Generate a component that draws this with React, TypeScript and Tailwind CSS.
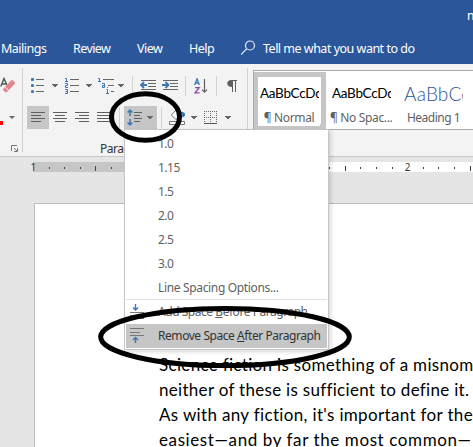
import React from 'react';

const UI = "font-['Noto_Sans','Open_Sans',sans-serif] whitespace-pre";

function Caret({ className = '' }: { className?: string }) {
  return (
    <svg className={`shrink-0 ${className}`} width="6" height="4" viewBox="0 0 6 4" shapeRendering="crispEdges">
      <path d="M0 0h6v1h-1v1h-1v1h-2v-1h-1v-1h-1z" fill="#666" />
    </svg>
  );
}

function Lines({ rows, className = '' }: { rows: [number, number][]; className?: string }) {
  return (
    <svg className={`shrink-0 ${className}`} width="14" height="11" viewBox="0 0 14 11" shapeRendering="crispEdges">
      {rows.map(([x, w], i) => (
        <rect key={i} x={x} y={i * 3} width={w} height="1" fill="#5f5f5f" />
      ))}
    </svg>
  );
}

function Rule({ className = '' }: { className?: string }) {
  return <div className={`w-px shrink-0 bg-[#d2d2d2] ${className}`} />;
}

function Bullets() {
  return (
    <svg className="shrink-0" width="14" height="16" viewBox="0 0 14 16">
      {[2, 8, 14].map((y) => (
        <g key={y}>
          <circle cx="1.5" cy={y - 0.5} r="1.6" fill="#3c77b5" />
          <path d={`M5 ${y - 0.5}h8`} stroke="#666" />
        </g>
      ))}
    </svg>
  );
}

function Numbers() {
  return (
    <svg className="shrink-0" width="15" height="18" viewBox="0 0 15 18">
      <g fill="none" stroke="#3c77b5">
        <path d="M0 1.5h1.5V4M0 4.5h3" />
        <path d="M0 6.5h2.5v2h-2v2H3" />
        <path d="M0 12.5h2.5v4H0M.5 14.5h2" />
      </g>
      <path d="M5 2.5h9M5 8.5h9M5 14.5h9" stroke="#666" />
    </svg>
  );
}

function Multilevel() {
  return (
    <svg className="shrink-0" width="16" height="18" viewBox="0 0 16 18">
      <g fill="none" stroke="#3c77b5">
        <path d="M0 1.5h1.5V4M0 4.5h3M4 6.5h2.5v4h-2v-2h2M8.5 12.5h1v4M8 16.5h3M9 10.5h1" />
      </g>
      <path d="M5 2.5h11M10 8.5h6M13 14.5h3" stroke="#666" />
    </svg>
  );
}

function Indent({ right = false }: { right?: boolean }) {
  return (
    <svg className="shrink-0" width="16" height="14" viewBox="0 0 16 14">
      <path d="M1 1.5h15M8 4.5h8M8 7.5h8M1 10.5h15" stroke="#666" />
      <path
        d={right ? 'M0 6h6M3.5 3l3 3-3 3' : 'M7 6H1M4 3L1 6l3 3'}
        stroke="#3c77b5"
        strokeWidth="1.8"
        fill="none"
      />
    </svg>
  );
}

function Sort() {
  return (
    <svg className="shrink-0" width="14" height="16" viewBox="0 0 14 16" fill="none">
      <path d="M.7 7L3 .8 5.4 7M1.5 5h3.2" stroke="#3c77b5" strokeWidth="1.3" />
      <path d="M1 9.6h4.2L1 14.9h4.5" stroke="#8850a0" strokeWidth="1.4" />
      <path d="M10.5 1v13M8 11.6l2.5 2.6 2.5-2.6" stroke="#5f5f5f" strokeWidth="1.2" />
    </svg>
  );
}

function Pilcrow() {
  return (
    <svg className="shrink-0" width="11" height="14" viewBox="0 0 11 14">
      <path d="M4.5 1H10v1H9v11H8V2H6v11H5V8C2 8 .3 6.5.3 4.4S1.8 1 4.5 1z" fill="#5f5f5f" />
    </svg>
  );
}

function Spacing() {
  return (
    <svg className="shrink-0" width="15" height="17" viewBox="0 0 15 17" fill="none">
      <path d="M3 1v6M.6 3.5L3 1.1l2.4 2.4M3 10v6M.6 13.5L3 15.9l2.4-2.4" stroke="#3c77b5" strokeWidth="1.5" />
      <path d="M7 3.5h8M7 6.5h6M7 9.5h8M7 12.5h6" stroke="#5f5f5f" />
    </svg>
  );
}

function Bucket() {
  return (
    <svg className="shrink-0" width="17" height="17" viewBox="0 0 17 17" fill="none">
      <path d="M7 1L2.3 6 7 10.5 12 6 7 1z" fill="#fff" stroke="#777" />
      <path d="M12 3c3-.5 4.5 1 4 3.3-.4 1.6-2 2.6-3 1.2z" fill="#3c77b5" />
      <path d="M.5 12.5h15v3H.5z" fill="#fff" stroke="#777" />
    </svg>
  );
}

function Borders() {
  return (
    <svg className="shrink-0" width="13" height="13" viewBox="0 0 13 13" fill="none" shapeRendering="crispEdges">
      <path d="M0 .5h13M0 6.5h13M.5 0v13M6.5 0v13M12.5 0v13" stroke="#666" strokeDasharray="1 1" />
      <path d="M0 12.5h13" stroke="#555" />
    </svg>
  );
}

function FontTools() {
  return (
    <div className="w-[22px] shrink-0">
      <svg width="22" height="92" viewBox="0 0 22 92" fill="none">
        <path d="M.8 22.5L4 14.6 7 21M1.8 20h4" stroke="#555" strokeWidth="1.4" />
        <path d="M3 25l8-8.5q1-1 2.2 0l1.4 1.5q1 1 0 2.1L7 28q-1 .6-2 0l-2-2z" fill="#e5868e" />
        <path d="M4.8 22.8l4 3.8" stroke="#f3f3f3" />
        <path d="M0 57h3v4H0z" fill="#f00" />
        <path d="M9 52h6l-3 3z" fill="#666" />
        <path d="M11.5 87v-5.5H17M14 84l3 3M17.5 84v3.5H14" stroke="#777" />
      </svg>
    </div>
  );
}

function Ruler() {
  const cells = Array.from({ length: 29 }, (_, i) => i);
  return (
    <div className="flex h-[10px] overflow-hidden bg-[linear-gradient(to_right,#e5e5e5_33px,#c6c6c6_33px,#c6c6c6_158px,#fff_158px)] pl-[25.7px]">
      {cells.map((i) => (
        <div key={i} className="flex w-[15.6px] shrink-0 items-center justify-center">
          {i % 8 === 0 ? (
            <span className={`${UI} text-[10px] leading-[10px] text-[#333]`}>{i === 0 ? '1' : i === 16 ? '1' : i === 24 ? '2' : ''}</span>
          ) : (
            <span className={i % 4 === 0 ? 'mt-[3px] h-[5px] w-px bg-[#444]' : 'mt-[2px] h-[2px] w-px bg-[#444]'} />
          )}
        </div>
      ))}
    </div>
  );
}

function MenuIcon({ after = false }: { after?: boolean }) {
  return (
    <svg className={`${after ? 'ml-1' : 'ml-[5px]'} w-[14px] shrink-0`} height="16" viewBox="0 0 14 16" fill="none">
      {after ? (
        <>
          <path d="M0 .5h14M0 4.5h10M0 7.5h14" stroke="#777" />
          <path d="M5.5 15V9.5M3 12L5.5 9.5 8 12" stroke="#3c77b5" strokeWidth="1.4" />
        </>
      ) : (
        <>
          <path d="M5.5 0v5.5M3 3.5L5.5 6 8 3.5" stroke="#3c77b5" strokeWidth="1.4" />
          <path d="M0 8.5h14M0 11.5h10M0 14.5h14" stroke="#777" />
        </>
      )}
    </svg>
  );
}

function Menu() {
  return (
    <div className={`${UI} absolute left-[124px] top-[129px] h-[221px] w-[205px] border border-[#c6c6c6] bg-white pt-px text-[12px] text-[#5f5f5f] shadow-[2px_2px_4px_rgba(0,0,0,0.15)]`}>
      {['1.0', '1.15', '1.5', '2.0', '2.5', '3.0'].map((v) => (
        <div key={v} className="h-6 pl-[33px] leading-[25px] tracking-[-0.5px]">{v}</div>
      ))}
      <div className="h-6 pl-[33px] leading-[25px] tracking-[-0.34px]">Line Spacing Options...</div>
      <div className="mx-px h-px bg-[#e1e1e1]" />
      <div className="flex h-6 items-center">
        <MenuIcon />
        <span className="ml-[14px] tracking-[-0.46px]">Add Space <u>B</u>efore Paragraph</span>
      </div>
      <div className="mx-px flex h-6 items-center bg-[#c6c6c6] text-[#333]">
        <MenuIcon after />
        <span className="ml-[14px] tracking-[-0.44px]">Remove Space <u>A</u>fter Paragraph</span>
      </div>
    </div>
  );
}

function Style({ sample, name, heading = false }: { sample: string; name: string; heading?: boolean }) {
  return (
    <div className="flex w-[62px] shrink-0 flex-col bg-white">
      <div
        className={
          heading
            ? "mr-[3px] h-8 overflow-hidden whitespace-nowrap font-['Lato',sans-serif] text-[19px] font-light leading-[33px] tracking-[0.2px] text-[#2e5496]"
            : "ml-[2px] mr-px h-8 overflow-hidden whitespace-nowrap font-['Lato',sans-serif] text-[13.5px] leading-[33px] tracking-[-0.3px] text-black"
        }
      >
        {sample}
      </div>
      <div className={`${UI} text-center text-[12px] leading-[17px] text-[#5f5f5f] ${heading ? 'pr-[3px] tracking-[-0.5px]' : 'tracking-[-0.35px]'}`}>{name}</div>
    </div>
  );
}

export default function App() {
  return (
    <div className="relative flex h-[447px] w-[473px] flex-col overflow-hidden bg-[#e5e5e5]">
      <header className={`${UI} flex h-16 shrink-0 flex-col bg-[#2b579a] text-white`}>
        <div className="h-8 pl-[467px] text-[12px] leading-8">n</div>
        <nav className="flex h-8 items-center pl-px text-[12.5px] leading-[33px] tracking-[-0.5px]">
          <span className="w-[72px]">Mailings</span>
          <span className="w-16 tracking-[-0.6px]">Review</span>
          <span className="w-[52px]">View</span>
          <span className="w-[52px]">Help</span>
          <svg className="shrink-0" width="15" height="16" viewBox="0 0 15 16" fill="none" stroke="#e6edf7" strokeWidth="1.2">
            <circle cx="9" cy="5.5" r="4.5" />
            <path d="M5.8 8.7L0 14.5" />
          </svg>
          <span className="ml-[7px]">Tell me what you want to do</span>
        </nav>
      </header>

      <section className="flex h-[93px] shrink-0 border-b border-[#c8c8c8] bg-[#f3f3f3]">
        <FontTools />
        <Rule className="mt-1 h-[84px]" />
        <div className="flex w-[224px] shrink-0 flex-col">
          <div className="flex h-[42px] shrink-0 items-center pl-2 pt-[2px]">
            <Bullets />
            <Caret className="ml-[7px]" />
            <div className="ml-[7px] flex"><Numbers /></div>
            <Caret className="ml-[6px]" />
            <div className="ml-[6px] flex"><Multilevel /></div>
            <Caret className="ml-[4px]" />
            <Rule className="ml-2 h-5" />
            <div className="ml-[7px] flex"><Indent /></div>
            <div className="ml-[6px] flex"><Indent right /></div>
            <Rule className="ml-[7px] h-5" />
            <div className="ml-2 flex"><Sort /></div>
            <Rule className="ml-2 h-5" />
            <div className="ml-[10px] flex"><Pilcrow /></div>
          </div>
          <div className="flex h-[23px] shrink-0 items-center pl-1">
            <div className="flex h-[23px] w-[22px] items-center justify-center bg-[#c6c6c6]">
              <Lines rows={[[0, 14], [0, 10], [0, 14], [0, 10]]} />
            </div>
            <Lines className="ml-1" rows={[[0, 14], [2, 10], [0, 14], [2, 10]]} />
            <Lines className="ml-2" rows={[[0, 14], [4, 10], [0, 14], [4, 10]]} />
            <Lines className="ml-2" rows={[[0, 14], [0, 14], [0, 14], [0, 14]]} />
            <Rule className="ml-2 h-[21px]" />
            <div className="ml-1 flex h-[23px] w-[33px] items-center bg-[#c6c6c6] pl-[3px]">
              <Spacing />
              <Caret className="ml-[5px]" />
            </div>
            <Rule className="ml-1 h-[21px]" />
            <div className="ml-[7px] flex"><Bucket /></div>
            <Caret className="ml-[5px]" />
            <div className="ml-[7px] flex"><Borders /></div>
            <Caret className="ml-[8px]" />
          </div>
          <div className={`${UI} pl-[77px] pt-[10px] text-[12px] leading-[19px] tracking-[-0.5px] text-[#333]`}>Paragraph</div>
        </div>
        <Rule className="mt-1 h-[84px]" />
        <div className="ml-[5px] mt-[6px] flex h-[60px] flex-1 overflow-hidden border-y border-l border-[#ababab] bg-white">
          <div className="mt-px h-[57px] w-[72px] shrink-0 border-[5px] border-l-4 border-[#c6c6c6]">
            <Style sample="AaBbCcDd" name="¶ Normal" />
          </div>
          <div className="ml-[4px] mt-[6px]"><Style sample="AaBbCcDd" name="¶ No Spac..." /></div>
          <div className="ml-[12px] mt-[6px]"><Style sample="AaBbCc" name="Heading 1" heading /></div>
        </div>
      </section>

      <div className="shrink-0 pt-[5px]"><Ruler /></div>

      <article className="ml-[34px] mt-[31px] flex-1 overflow-hidden border-l border-t border-[#bdbdbd] bg-white pl-[124px] pt-[148px] font-['Lato',sans-serif] text-[17px] leading-[25px] text-black">
        <p className="whitespace-pre tracking-[0.32px]">Science fiction is something of a misnom</p>
        <p className="whitespace-pre tracking-[0.3px]">neither of these is sufficient to define it.</p>
        <p className="whitespace-pre tracking-[0.34px]">As with any fiction, it's important for the</p>
        <p className="whitespace-pre tracking-[0.6px]">easiest—and by far the most common—</p>
      </article>

      <Menu />

      <svg className="pointer-events-none absolute left-0 top-0" width="473" height="447" fill="none" stroke="#000" strokeWidth="5">
        <ellipse cx="145.5" cy="117" rx="34" ry="23.3" />
        <ellipse cx="225" cy="337" rx="124.3" ry="28.6" />
      </svg>
    </div>
  );
}
